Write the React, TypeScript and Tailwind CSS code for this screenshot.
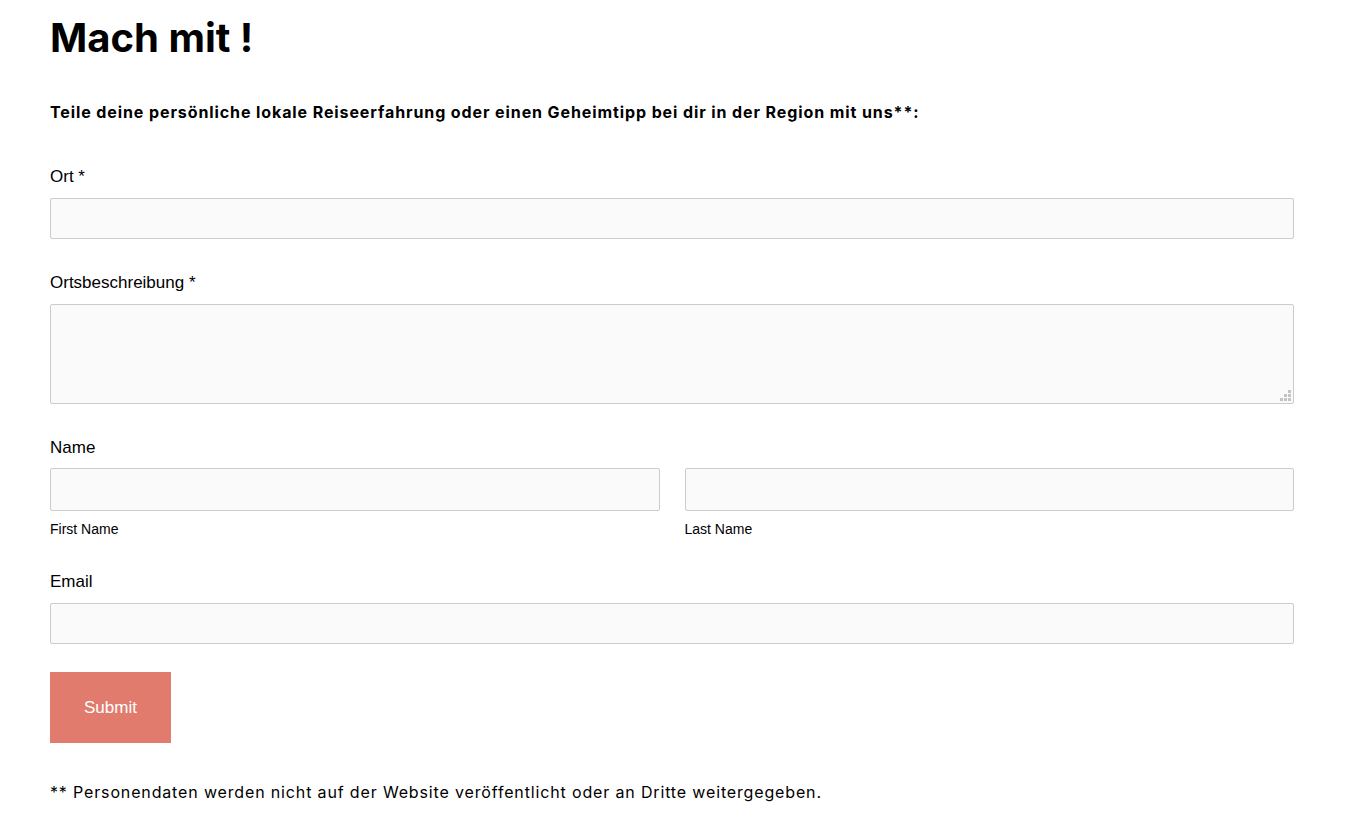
import React from 'react';

const inputCls =
  'block w-full rounded-[2px] border border-[#cccccc] bg-[#fafafa] px-3 text-[16px] text-[#333] outline-none';

const Label: React.FC<{ children: React.ReactNode; className?: string }> = ({ children, className }) => (
  <label className={`block h-6 pt-px text-[17px] leading-6 text-black font-['Liberation_Sans',Arial,sans-serif] ${className ?? ''}`}>
    {children}
  </label>
);

const ResizeGrip = () => (
  <div className="pointer-events-none absolute bottom-[3px] right-[3px] grid grid-cols-3 gap-px">
    <span className="h-[3px] w-[3px]" />
    <span className="h-[3px] w-[3px]" />
    <span className="h-[3px] w-[3px] bg-[#c4c4c4]" />
    <span className="h-[3px] w-[3px]" />
    <span className="h-[3px] w-[3px] bg-[#c4c4c4]" />
    <span className="h-[3px] w-[3px] bg-[#c4c4c4]" />
    <span className="h-[3px] w-[3px] bg-[#c4c4c4]" />
    <span className="h-[3px] w-[3px] bg-[#c4c4c4]" />
    <span className="h-[3px] w-[3px] bg-[#c4c4c4]" />
  </div>
);

export default function App() {
  return (
    <div className="min-h-screen bg-white">
      <div className="ml-[50px] w-[1244px] pt-[14px]">
        <h1 className="h-12 text-[40px] font-bold leading-[48px] text-black font-['Inter',sans-serif]">Mach mit !</h1>

        <p className="mt-[38px] h-6 text-[16px] font-bold leading-6 tracking-[0.9px] text-black font-['Inter',sans-serif]">
          Teile deine persönliche lokale Reiseerfahrung oder einen Geheimtipp bei dir in der Region mit uns**:
        </p>

        <form className="mt-10" onSubmit={(e) => e.preventDefault()}>
          <Label>Ort *</Label>
          <input type="text" className={`${inputCls} mt-[10px] h-[41px]`} />

          <Label className="mt-[31px]">Ortsbeschreibung *</Label>
          <div className="relative mt-[10px]">
            <textarea className={`${inputCls} h-[100px] resize-none py-2`} />
            <ResizeGrip />
          </div>

          <Label className="mt-[31px]">Name</Label>
          <div className="mt-[9px] grid grid-cols-2 gap-[25px]">
            <div>
              <input type="text" className={`${inputCls} h-[43px]`} />
              <div className="mt-2 h-5 text-[14px] leading-5 text-black font-['Liberation_Sans',Arial,sans-serif]">First Name</div>
            </div>
            <div>
              <input type="text" className={`${inputCls} h-[43px]`} />
              <div className="mt-2 h-5 text-[14px] leading-5 text-black font-['Liberation_Sans',Arial,sans-serif]">Last Name</div>
            </div>
          </div>

          <Label className="mt-[30px]">Email</Label>
          <input type="email" className={`${inputCls} mt-[10px] h-[41px]`} />

          <button
            type="submit"
            className="mt-[28px] block h-[71px] w-[121px] bg-[#e07b6e] text-[17px] text-white font-['Liberation_Sans',Arial,sans-serif]"
          >
            Submit
          </button>
        </form>

        <p className="mt-[37px] h-6 text-[16px] leading-6 tracking-[0.85px] text-black font-['Inter',sans-serif]">
          ** Personendaten werden nicht auf der Website veröffentlicht oder an Dritte weitergegeben.
        </p>
      </div>
    </div>
  );
}
